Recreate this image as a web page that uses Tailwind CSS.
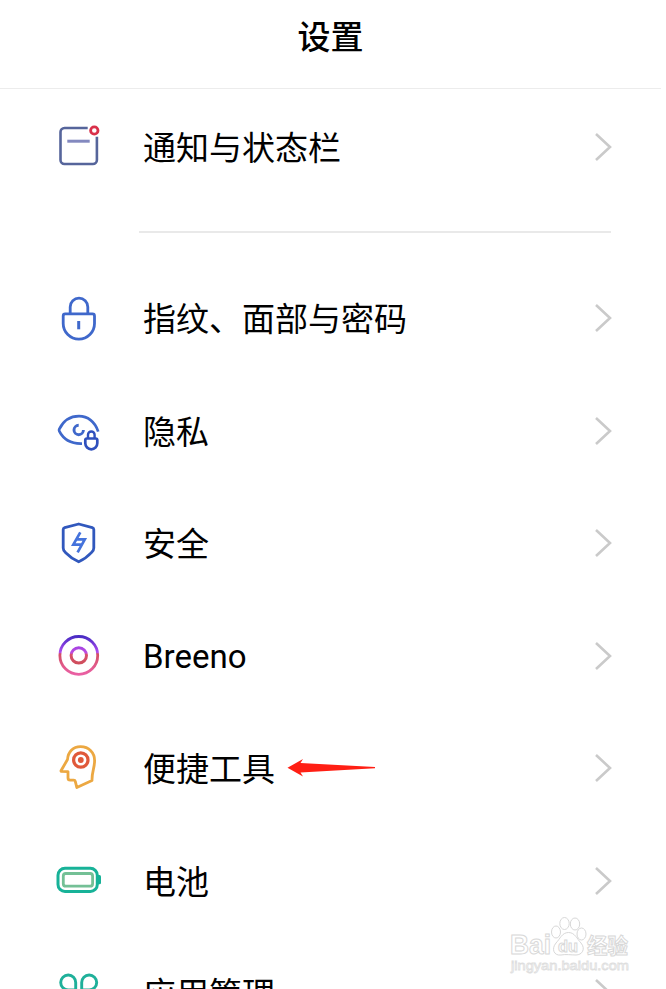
<!DOCTYPE html>
<html lang="zh-CN">
<head>
    <meta charset="UTF-8">
    <meta name="viewport" content="width=device-width, initial-scale=1.0">
    <title>设置</title>
    <script src="https://cdn.jsdelivr.net/npm/@tailwindcss/browser@4"></script>
</head>
<body class="bg-white">
    <div class="relative h-[989px] overflow-hidden bg-white font-['Roboto','Noto_Sans_CJK_SC',sans-serif] text-[33px] leading-[48px] text-black">
        <header class="flex h-[89px] w-[661px] justify-center border-b border-[#ececec] pt-[14px]">
            <h1 class="text-[33px] font-medium">设置</h1>
        </header>

        <main class="w-[661px]">
            <a class="flex h-[116px] items-center pr-[48px] pl-[55px]">
                <svg class="size-12 shrink-0" viewBox="0 0 48 48" fill="none">
                    <path d="M32.7 5H9.5a4 4 0 0 0-4 4v28a4 4 0 0 0 4 4h28.4a4 4 0 0 0 4-4V13.8" stroke="#56659b" stroke-width="2.6"/>
                    <path d="M12.3 18.2h22.4" stroke="#8389bf" stroke-width="3"/>
                    <circle cx="39.3" cy="7.5" r="3.7" stroke="#d9304a" stroke-width="2.8"/>
                </svg>
                <span class="ml-10 flex-1 pt-1">通知与状态栏</span>
                <svg class="h-8 w-5" viewBox="0 0 20 32" fill="none" stroke="#cacaca" stroke-width="2.6"><path d="M3 3l14 13L3 29"/></svg>
            </a>

            <div class="mt-[26px] mr-[50px] ml-[139px] h-0.5 bg-[#e9e9e9]"></div>

            <div class="mt-[28.75px]">
                <a class="flex h-[112.5px] items-center pr-[48px] pl-[55px]">
                    <svg class="size-12 shrink-0" viewBox="0 0 48 48" fill="none" stroke="#3f68cb" stroke-width="2.8">
                        <path d="M15.2 20v-7a8.800 8.800 0 0 1 17.600 0v7"/>
                        <path d="M10.200 19.900h27.300a2 2 0 0 1 2 2v7.500a15.650 15.650 0 0 1-31.300 0v-7.500a2 2 0 0 1 2-2z"/>
                        <path d="M23.700 27v8.300" stroke-width="3"/>
                    </svg>
                    <span class="ml-10 flex-1 pt-1">指纹、面部与密码</span>
                    <svg class="h-8 w-5" viewBox="0 0 20 32" fill="none" stroke="#cacaca" stroke-width="2.6"><path d="M3 3l14 13L3 29"/></svg>
                </a>

                <a class="flex h-[112.5px] items-center pr-[48px] pl-[55px]">
                    <svg class="size-12 shrink-0" viewBox="0 0 48 48" fill="none" stroke="#3f68cb" stroke-width="2.7">
                        <path d="M43.200 24.600C40 14.500 32.500 9.200 24 9.200 14 9.200 7.500 15.500 4.300 22.200q-.5 1 0 2C8.500 32.500 15.500 37 27 36.600"/>
                        <path d="M23.700 18.300a4.700 4.700 0 1 0 4.700 4.700" stroke-width="2.900"/>
                        <g stroke="#2f50bd" stroke-width="2.700">
                            <path d="M33 31.500v-3.700a3.300 3.300 0 0 1 6.600 0v3.700" stroke-width="2.400"/>
                            <path d="M31.900 31.500h8.800a1.600 1.600 0 0 1 1.600 1.600v3.200a6 6 0 0 1-12 0v-3.200a1.600 1.600 0 0 1 1.600-1.600z"/>
                        </g>
                    </svg>
                    <span class="ml-10 flex-1 pt-1">隐私</span>
                    <svg class="h-8 w-5" viewBox="0 0 20 32" fill="none" stroke="#cacaca" stroke-width="2.6"><path d="M3 3l14 13L3 29"/></svg>
                </a>

                <a class="flex h-[112.5px] items-center pr-[48px] pl-[55px]">
                    <svg class="size-12 shrink-0" viewBox="0 0 48 48" fill="none" stroke="#3158bd" stroke-width="2.8" stroke-linejoin="round">
                        <path d="M23.700 5L37.300 8.600q1.500.5 1.500 2V29q0 2.600-2.200 4.400Q31 39.500 23.700 42.800 16.400 39.500 10.400 33.400 8.200 31.600 8.200 29V10.600q0-1.500 1.500-2z"/>
                        <path d="M25.300 13.300L18.300 25.600H26.500M21 20.300H29.800L22.600 33.300" stroke="#4573dc" stroke-width="2.700" stroke-linejoin="miter"/>
                    </svg>
                    <span class="ml-10 flex-1 pt-1">安全</span>
                    <svg class="h-8 w-5" viewBox="0 0 20 32" fill="none" stroke="#cacaca" stroke-width="2.6"><path d="M3 3l14 13L3 29"/></svg>
                </a>

                <a class="flex h-[112.5px] items-center pr-[48px] pl-[55px]">
                    <svg class="size-12 shrink-0" viewBox="0 0 48 48" fill="none">
                        <defs>
                            <linearGradient id="ring" x1="0" y1="0" x2="0" y2="1">
                                <stop offset="0" stop-color="#4a2cc4"/>
                                <stop offset=".42" stop-color="#b04cf0"/>
                                <stop offset=".46" stop-color="#d34f63"/>
                                <stop offset="1" stop-color="#ea60a4"/>
                            </linearGradient>
                            <linearGradient id="core" x1="0" y1="0" x2="0" y2="1">
                                <stop offset="0" stop-color="#a744e2"/>
                                <stop offset=".35" stop-color="#c04ce0"/>
                                <stop offset=".42" stop-color="#d9506f"/>
                                <stop offset="1" stop-color="#cf4e5c"/>
                            </linearGradient>
                        </defs>
                        <circle cx="23.800" cy="23.400" r="18.900" stroke="url(#ring)" stroke-width="2.800"/>
                        <circle cx="23.800" cy="23.400" r="7.700" stroke="url(#core)" stroke-width="3"/>
                    </svg>
                    <span class="ml-10 flex-1 pt-0.5">Breeno</span>
                    <svg class="h-8 w-5" viewBox="0 0 20 32" fill="none" stroke="#cacaca" stroke-width="2.6"><path d="M3 3l14 13L3 29"/></svg>
                </a>

                <a class="flex h-[112.5px] items-center pr-[48px] pl-[55px]">
                    <svg class="size-12 shrink-0" viewBox="0 0 48 48" fill="none">
                        <path d="M6 26.800L12.500 15.500C13 8 18 2.700 25.500 2.700 34 2.700 39.600 8.800 39.600 16.500 39.600 24.500 36.800 27.500 37 36.600L21.800 43.500 20.300 37.300Q20 36.200 18.800 36.200H15.200Q13 36.200 13 34V27.600L6 27.300z" stroke="#eca842" stroke-width="2.800" stroke-linejoin="round"/>
                        <circle cx="25.800" cy="16" r="7.200" stroke="#e0593a" stroke-width="3.200"/>
                        <circle cx="25.800" cy="16" r="2.900" fill="#e0593a"/>
                    </svg>
                    <span class="ml-10 pt-1">便捷工具</span>
                    <div class="flex-1 pl-3">
                        <svg class="h-5 w-[90px]" viewBox="0 0 90 20"><path d="M.5 9.800L16 1 13.500 5 88 8.900V10.300L13.500 14.500 16 18.600z" fill="#ff1f14"/></svg>
                    </div>
                    <svg class="h-8 w-5" viewBox="0 0 20 32" fill="none" stroke="#cacaca" stroke-width="2.6"><path d="M3 3l14 13L3 29"/></svg>
                </a>

                <a class="flex h-[112.5px] items-center pr-[48px] pl-[55px]">
                    <svg class="size-12 shrink-0" viewBox="0 0 48 48" fill="none">
                        <rect x="3" y="11.300" width="39.300" height="23.100" rx="7" stroke="#17b298" stroke-width="3"/>
                        <rect x="8.300" y="16.500" width="29.300" height="12.700" rx="2.500" stroke="#74c096" stroke-width="2.800"/>
                        <path d="M43 18h1.500q1.500 0 1.500 1.500v6.300q0 1.500-1.500 1.500H43z" fill="#17b298"/>
                    </svg>
                    <span class="ml-10 flex-1 pt-1">电池</span>
                    <svg class="h-8 w-5" viewBox="0 0 20 32" fill="none" stroke="#cacaca" stroke-width="2.6"><path d="M3 3l14 13L3 29"/></svg>
                </a>

                <a class="flex h-[112.5px] items-center pr-[48px] pl-[55px]">
                    <svg class="size-12 shrink-0" viewBox="0 0 48 48" fill="none" stroke="#1fb09a" stroke-width="2.900">
                        <path d="M20.700 21V13.600a7.500 7.500 0 1 0-7.500 7.400z"/>
                        <path d="M26.700 21V13.600a7.500 7.500 0 1 1 7.500 7.400z"/>
                        <path d="M20.700 27H13.200a7.500 7.500 0 1 0 7.500 7.500zM26.700 27H34.200a7.500 7.500 0 1 1-7.500 7.500z"/>
                    </svg>
                    <span class="ml-10 flex-1 pt-1">应用管理</span>
                    <svg class="h-8 w-5" viewBox="0 0 20 32" fill="none" stroke="#cacaca" stroke-width="2.6"><path d="M3 3l14 13L3 29"/></svg>
                </a>
            </div>
        </main>

        <!-- 水印 -->
        <svg class="absolute top-[910px] left-[505px] h-[70px] w-[130px]" viewBox="0 0 130 70" fill="#fff" stroke="#d8d8d8" stroke-width="1">
            <g class="font-['Liberation_Sans','Noto_Sans_CJK_SC',sans-serif] font-bold">
                <text x="5" y="44" font-size="27" textLength="41" lengthAdjust="spacingAndGlyphs">Bai</text>
                <text x="82" y="43" font-size="21" textLength="41" lengthAdjust="spacingAndGlyphs">经验</text>
            </g>
            <ellipse cx="51" cy="22" rx="4.500" ry="6"/>
            <ellipse cx="59.500" cy="13.500" rx="4.700" ry="6"/>
            <ellipse cx="70" cy="14" rx="4.700" ry="6"/>
            <ellipse cx="76.500" cy="24" rx="4.500" ry="6"/>
            <path d="M63.500 22.500C70 22.500 72 29 76 33 81 39 77 45 71 45 66 45 61 44 56 45 49 46 46 39 51 33 55 29 57 22.500 63.500 22.500z"/>
            <text x="53" y="42" font-size="17" textLength="20" lengthAdjust="spacingAndGlyphs" class="font-['Liberation_Sans',sans-serif] font-bold">du</text>
            <text x="6" y="60" font-size="13.500" textLength="118" lengthAdjust="spacingAndGlyphs" stroke="#dedede" stroke-width=".8" class="font-['Liberation_Sans',sans-serif]">jingyan.baidu.com</text>
        </svg>
    </div>
</body>
</html>
